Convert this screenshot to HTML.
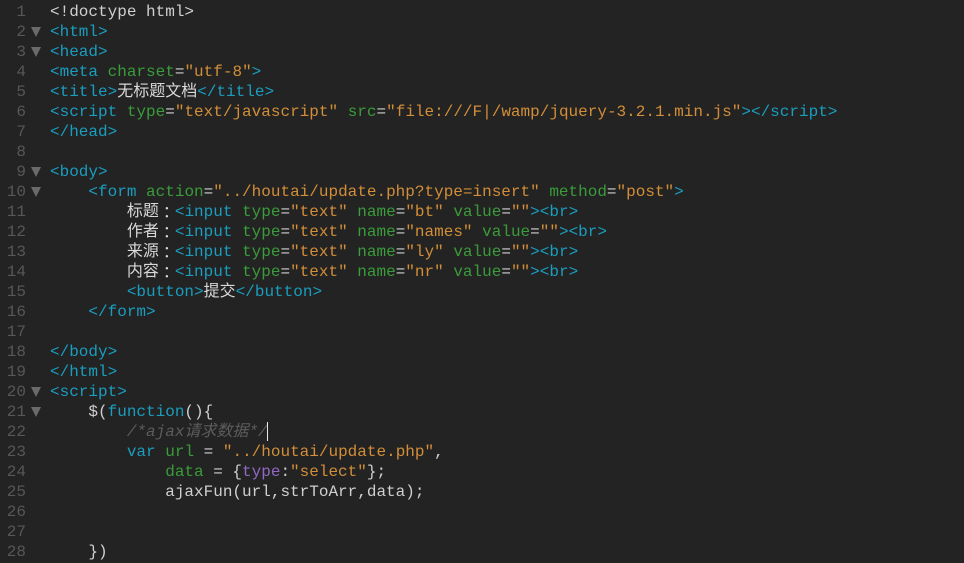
<!DOCTYPE html>
<html><head><meta charset="utf-8">
<style>
html,body{margin:0;padding:0;background:#232323;}
#w{position:relative;width:964px;height:563px;overflow:hidden;background:#232323;font:16px/20px "Liberation Mono","Noto Sans CJK SC",monospace;color:#cfcfcf;}
.l{position:absolute;left:50px;white-space:pre;height:20px;margin-top:1px;}
.n{position:absolute;left:0;width:26px;text-align:right;color:#575757;height:20px;margin-top:1px;}
.a{position:absolute;left:31px;width:0;height:0;border-left:5.5px solid transparent;border-right:5.5px solid transparent;border-top:10px solid #6a6a6a;}
i{font-style:normal;}
.t{color:#1a9dbe}.g{color:#3a9c3a}.s{color:#d28e38}.p{color:#9268c6}.c{color:#5c5c5c;font-style:italic}
.z{font-family:"Noto Sans CJK TC","Noto Sans CJK SC","WenQuanYi Zen Hei",sans-serif;line-height:0;color:#d8d8d8}
.c .z{color:#5c5c5c}
.k{position:relative;top:2px;}
#cur{position:absolute;left:267px;top:422px;width:1px;height:19px;background:#e8e8e8;}
</style></head><body><div id="w">
<div class="n" style="top:1px">1</div>
<div class="n" style="top:21px">2</div>
<div class="n" style="top:41px">3</div>
<div class="n" style="top:61px">4</div>
<div class="n" style="top:81px">5</div>
<div class="n" style="top:101px">6</div>
<div class="n" style="top:121px">7</div>
<div class="n" style="top:141px">8</div>
<div class="n" style="top:161px">9</div>
<div class="n" style="top:181px">10</div>
<div class="n" style="top:201px">11</div>
<div class="n" style="top:221px">12</div>
<div class="n" style="top:241px">13</div>
<div class="n" style="top:261px">14</div>
<div class="n" style="top:281px">15</div>
<div class="n" style="top:301px">16</div>
<div class="n" style="top:321px">17</div>
<div class="n" style="top:341px">18</div>
<div class="n" style="top:361px">19</div>
<div class="n" style="top:381px">20</div>
<div class="n" style="top:401px">21</div>
<div class="n" style="top:421px">22</div>
<div class="n" style="top:441px">23</div>
<div class="n" style="top:461px">24</div>
<div class="n" style="top:481px">25</div>
<div class="n" style="top:501px">26</div>
<div class="n" style="top:521px">27</div>
<div class="n" style="top:541px">28</div>
<div class="a" style="top:27px"></div>
<div class="a" style="top:47px"></div>
<div class="a" style="top:167px"></div>
<div class="a" style="top:187px"></div>
<div class="a" style="top:387px"></div>
<div class="a" style="top:407px"></div>
<div class="l" style="top:1px">&lt;!doctype html&gt;</div>
<div class="l t" style="top:21px">&lt;html&gt;</div>
<div class="l t" style="top:41px">&lt;head&gt;</div>
<div class="l" style="top:61px"><i class="t">&lt;meta</i> <i class="g">charset</i>=<i class="s">"utf-8"</i><i class="t">&gt;</i></div>
<div class="l" style="top:81px"><i class="t">&lt;title&gt;</i><i class="z">无标题文档</i><i class="t">&lt;/title&gt;</i></div>
<div class="l" style="top:101px"><i class="t">&lt;script</i> <i class="g">type</i>=<i class="s">"text/javascript"</i> <i class="g">src</i>=<i class="s">"file:///F|/wamp/jquery-3.2.1.min.js"</i><i class="t">&gt;&lt;/script&gt;</i></div>
<div class="l t" style="top:121px">&lt;/head&gt;</div>
<div class="l t" style="top:161px">&lt;body&gt;</div>
<div class="l" style="top:181px">    <i class="t">&lt;form</i> <i class="g">action</i>=<i class="s">"../houtai/update.php?type=insert"</i> <i class="g">method</i>=<i class="s">"post"</i><i class="t">&gt;</i></div>
<div class="l" style="top:201px">        <i class="z">标题<i class="k">：</i></i><i class="t">&lt;input</i> <i class="g">type</i>=<i class="s">"text"</i> <i class="g">name</i>=<i class="s">"bt"</i> <i class="g">value</i>=<i class="s">""</i><i class="t">&gt;&lt;br&gt;</i></div>
<div class="l" style="top:221px">        <i class="z">作者<i class="k">：</i></i><i class="t">&lt;input</i> <i class="g">type</i>=<i class="s">"text"</i> <i class="g">name</i>=<i class="s">"names"</i> <i class="g">value</i>=<i class="s">""</i><i class="t">&gt;&lt;br&gt;</i></div>
<div class="l" style="top:241px">        <i class="z">来源<i class="k">：</i></i><i class="t">&lt;input</i> <i class="g">type</i>=<i class="s">"text"</i> <i class="g">name</i>=<i class="s">"ly"</i> <i class="g">value</i>=<i class="s">""</i><i class="t">&gt;&lt;br&gt;</i></div>
<div class="l" style="top:261px">        <i class="z">内容<i class="k">：</i></i><i class="t">&lt;input</i> <i class="g">type</i>=<i class="s">"text"</i> <i class="g">name</i>=<i class="s">"nr"</i> <i class="g">value</i>=<i class="s">""</i><i class="t">&gt;&lt;br&gt;</i></div>
<div class="l" style="top:281px">        <i class="t">&lt;button&gt;</i><i class="z">提交</i><i class="t">&lt;/button&gt;</i></div>
<div class="l t" style="top:301px">    &lt;/form&gt;</div>
<div class="l t" style="top:341px">&lt;/body&gt;</div>
<div class="l t" style="top:361px">&lt;/html&gt;</div>
<div class="l t" style="top:381px">&lt;script&gt;</div>
<div class="l" style="top:401px">    $(<i class="t">function</i>(){</div>
<div class="l c" style="top:421px">        /*ajax<i class="z" style="font-style:italic">请求数据</i>*/</div>
<div class="l" style="top:441px">        <i class="t">var</i> <i class="g">url</i> = <i class="s">"../houtai/update.php"</i>,</div>
<div class="l" style="top:461px">            <i class="g">data</i> = {<i class="p">type</i>:<i class="s">"select"</i>};</div>
<div class="l" style="top:481px">            ajaxFun(url,strToArr,data);</div>
<div class="l" style="top:541px">    })</div>
<div id="cur"></div>
</div></body></html>
